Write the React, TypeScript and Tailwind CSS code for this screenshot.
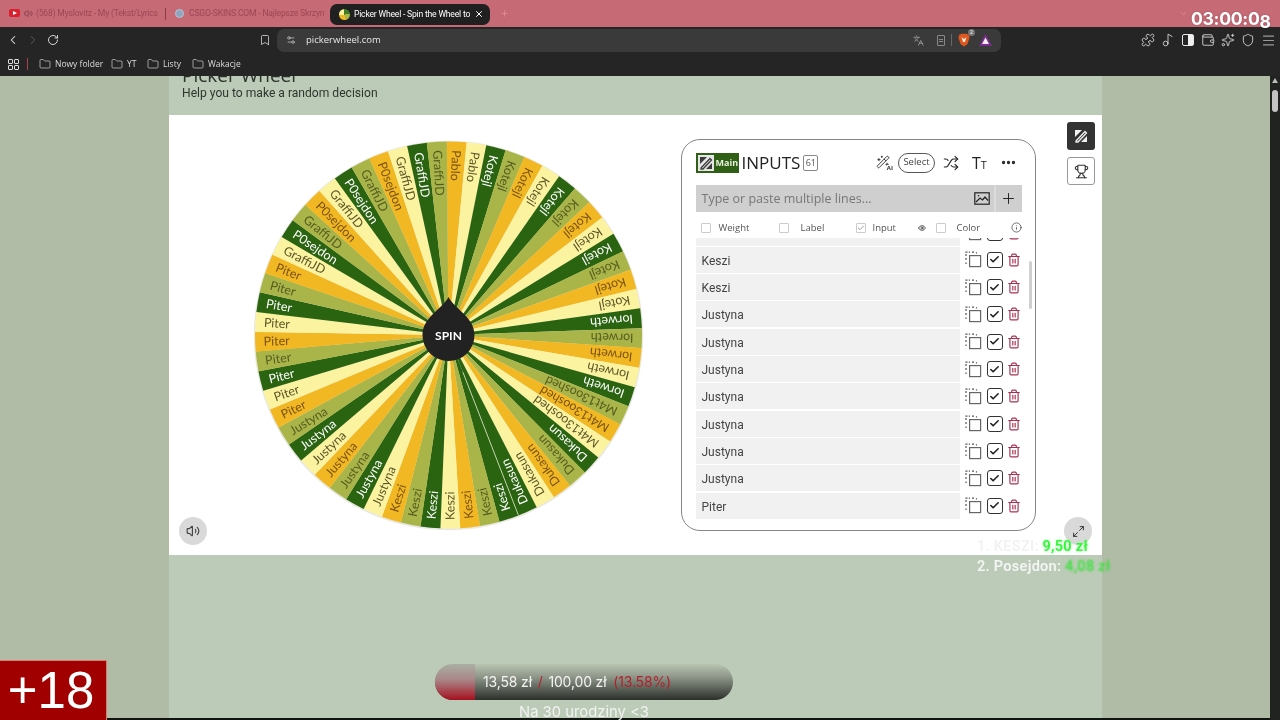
import React from "react";
import {
  Bookmark, Check, ChevronDown, ChevronLeft, ChevronRight, Ellipsis, Folder, Info, Languages, Maximize2,
  Menu, Music2, Plus, Puzzle, RotateCw, Settings2, Shield, Shuffle, Sparkles, Trash2, Trophy, Volume2, Wallet,
  WandSparkles, X, Eye,
} from "lucide-react";

const C = [
  { fill: "#f2b824", text: "#7a5312" },
  { fill: "#fbf3a0", text: "#5a5628" },
  { fill: "#2b6411", text: "#ffffff" },
  { fill: "#a9b548", text: "#565c22" },
];

const seq: [string, number][] = [
  ["Pablo", 2], ["Kotejl", 12], ["Iorweth", 5], ["M4t13ooshed", 3], ["Dukasun", 5],
];
const seq2: [string, number][] = [["Keszi", 7], ["Justyna", 7], ["Piter", 9]];
const tail = ["GraffiJD", "P0sejdon", "GraffiJD", "P0sejdon", "GraffiJD", "P0sejdon", "GraffiJD", "P0sejdon", "GraffiJD", "GraffiJD", "GraffiJD"];

function buildSegments() {
  const out: { label: string; c: number }[] = [];
  let ci = 0;
  for (const [l, n] of seq) for (let i = 0; i < n; i++) out.push({ label: l, c: ci++ % 4 });
  ci = 2;
  for (const [l, n] of seq2) for (let i = 0; i < n; i++) out.push({ label: l, c: ci++ % 4 });
  for (const l of tail) out.push({ label: l, c: ci++ % 4 });
  return out;
}

function Wheel() {
  const segs = buildSegments();
  const step = 360 / segs.length;
  const cx = 200.5, cy = 200, r = 193.5;
  const pt = (a: number, rad: number) => {
    const t = ((a - 90) * Math.PI) / 180;
    return [cx + rad * Math.cos(t), cy + rad * Math.sin(t)];
  };
  return (
    <svg viewBox="0 0 400 400" className="w-[400px] h-[400px] shrink-0 mt-[20px] ml-[79px]">
      <circle cx={cx} cy={cy + 0.5} r={r + 1.2} fill="#e9e9e2" />
      {segs.map((s, i) => {
        const mid = 2.4 + i * step;
        const [x1, y1] = pt(mid - step / 2, r);
        const [x2, y2] = pt(mid + step / 2 + 0.05, r);
        return <path key={i} d={`M${cx} ${cy}L${x1} ${y1}A${r} ${r} 0 0 1 ${x2} ${y2}Z`} fill={C[s.c].fill} />;
      })}
      <line x1={pt(158.8, 40)[0]} y1={pt(158.8, 40)[1]} x2={pt(158.8, r)[0]} y2={pt(158.8, r)[1]} stroke="#dfe8c8" strokeWidth="0.8" />
      {segs.map((s, i) => {
        const mid = 2.4 + i * step;
        const [x, y] = pt(mid, 185);
        return (
          <text key={i} x={x} y={y} dy="4.3" fontSize="12.5" fill={C[s.c].text} className="font-['Lato',sans-serif]"
            transform={`rotate(${mid + 90} ${x} ${y})`}>{s.label}</text>
        );
      })}
      <path d={`M${cx} ${cy - 38}C${cx + 6} ${cy - 26} ${cx + 26} ${cy - 18} ${cx + 26} ${cy}A26 26 0 1 1 ${cx - 26} ${cy}C${cx - 26} ${cy - 18} ${cx - 6} ${cy - 26} ${cx} ${cy - 38}Z`} fill="#222222" />
      <text x={cx} y={cy + 5} textAnchor="middle" fontSize="12" fontWeight="700" fill="#fff" className="font-['Lato',sans-serif]">SPIN</text>
    </svg>
  );
}

function DashCopy() {
  return (
    <svg width="17" height="17" viewBox="0 0 17 17" fill="none" stroke="#555" strokeWidth="1.2">
      <rect x="4.6" y="4.6" width="11" height="11" stroke="#666" />
      <path d="M1 5V1.2H5M7 1.2H10M11.5 1.2V2.6M1 7V10M1 11.5V13" strokeDasharray="2 1.3" />
    </svg>
  );
}

function Row({ name }: { name: string }) {
  return (
    <div className="flex items-center h-[26px] mb-[1.33px] shrink-0">
      <div className="w-[264px] h-full bg-[#f1f1f1] pl-[6px] pt-[2px] flex items-center text-[12px] text-[#444] font-['Roboto',sans-serif]">{name}</div>
      <div className="ml-[5px] flex items-center">
        <DashCopy />
        <div className="ml-[5px] w-[16px] h-[16px] rounded-[3px] border-[1.5px] border-[#333] flex items-center justify-center">
          <Check size={11} strokeWidth={3.5} className="text-[#222]" />
        </div>
        <Trash2 size={14} strokeWidth={2} className="ml-[4px] text-[#a8304f]" />
      </div>
    </div>
  );
}

function Box({ checked }: { checked?: boolean }) {
  return (
    <span className="w-[10px] h-[10px] border border-[#ccc] rounded-[1px] flex items-center justify-center shrink-0">
      {checked && <Check size={8} strokeWidth={2} className="text-[#666]" />}
    </span>
  );
}

function PenLogo({ color, bg }: { color: string; bg: string }) {
  return (
    <svg width="16" height="16" viewBox="0 0 16 16" style={{ background: bg }}>
      <path d="M2 2H9L2 9ZM14 14H8L14 8Z" fill={color} />
      <path d="M3 13L12 3.5L13.5 5L5 14H3Z" fill="none" stroke={color} strokeWidth="1.3" />
    </svg>
  );
}

function InputsPanel() {
  const names = ["", "Keszi", "Keszi", "Justyna", "Justyna", "Justyna", "Justyna", "Justyna", "Justyna", "Justyna", "Piter"];
  return (
    <div className="relative ml-[33px] mt-[24px] w-[355px] h-[392px] shrink-0 rounded-[19px] border-[1.5px] border-[#858585] pl-[13.5px] pr-[12px] pt-[12.5px] bg-white">
      <div className="flex items-center h-[20px]">
        <div className="flex items-center w-[43px] h-[20px] bg-[#2f6016] pl-[2px]">
          <PenLogo color="#3c3c3c" bg="#e6e6e6" />
          <span className="ml-[2px] text-[9px] font-bold text-[#e8f2dc]">Main</span>
        </div>
        <span className="ml-[3px] text-[17px] leading-none text-[#222]">INPUTS</span>
        <span className="ml-[3px] w-[15px] h-[16px] border border-[#888] rounded-[2px] text-[9px] text-[#555] flex items-center justify-center">61</span>
        <div className="ml-auto flex items-center">
          <span className="relative w-[15px] h-[15px]">
            <WandSparkles size={14} strokeWidth={1.6} className="text-[#333]" />
            <span className="absolute -right-[2px] -bottom-[1px] text-[6px] leading-none font-bold text-[#333] bg-white">AI</span>
          </span>
          <span className="ml-[7px] w-[37px] h-[20px] rounded-full border border-[#555] text-[9.5px] text-[#444] flex items-center justify-center">Select</span>
          <Shuffle size={16} strokeWidth={1.6} className="ml-[8px] text-[#222]" />
          <span className="ml-[13px] text-[16px] leading-none text-[#222] flex items-baseline w-[17px]">T<span className="text-[11px]">T</span></span>
          <Ellipsis size={17} strokeWidth={2.6} className="ml-[11px] mr-[6px] text-[#222]" />
        </div>
      </div>
      <div className="mt-[12px] flex h-[27px] w-[326px] bg-[#cfcfcf]">
        <div className="flex-1 flex items-center pl-[6px] pt-[3px] text-[12.5px] font-medium text-[#777]">Type or paste multiple lines...</div>
        <div className="w-[24px] flex items-center justify-center">
          <svg width="16" height="13" viewBox="0 0 16 13" fill="none" stroke="#222" strokeWidth="1.2">
            <rect x=".8" y=".8" width="14.4" height="11.4" />
            <path d="M2 10L6 6L8.5 8L11 5L14 8.5" />
            <circle cx="4.5" cy="3.8" r=".8" fill="#222" stroke="none" />
          </svg>
        </div>
        <div className="w-[28px] border-l-2 border-[#dcdcdc] flex items-center justify-center"><Plus size={17} strokeWidth={1.4} className="text-[#222]" /></div>
      </div>
      <div className="mt-[6px] flex items-center h-[20px] text-[9.5px] text-[#555]">
        <span className="ml-[5px]"><Box /></span>
        <span className="ml-[8px] w-[60px] pt-[2px]">Weight</span>
        <Box />
        <span className="ml-[12px] w-[55px] pt-[2px]">Label</span>
        <Box checked />
        <span className="ml-[7px] w-[45px] pt-[2px]">Input</span>
        <Eye size={8} strokeWidth={2.4} className="text-[#333]" />
        <span className="ml-[10px]"><Box /></span>
        <span className="ml-[11px] w-[54px] pt-[2px]">Color</span>
        <Info size={11} strokeWidth={1.5} className="text-[#333]" />
      </div>
      <div className="h-[282px] overflow-hidden relative">
        <div className="-mt-[18px] flex flex-col">
          {names.map((n, i) => <Row key={i} name={n} />)}
        </div>
      </div>
      <span className="absolute left-[347px] top-[121px] w-[3px] h-[48px] rounded-full bg-[#cfcfcf]" />
    </div>
  );
}

function Tab({ label, icon }: { label: string; icon: React.ReactNode }) {
  return (
    <div className="flex items-center">
      {icon}
      <span className="whitespace-nowrap text-[8.6px] tracking-[-0.2px] text-[#9c4754] font-['Roboto',sans-serif]">{label}</span>
    </div>
  );
}

function FolderItem({ label, w }: { label: string; w: string }) {
  return (
    <div className={`flex items-center ${w}`}>
      <Folder size={12} strokeWidth={1.3} className="text-[#ddd]" />
      <span className="ml-[4px] text-[8.5px] text-[#ddd]">{label}</span>
    </div>
  );
}

export default function App() {
  const iconCls = "text-[#d8d8d8]";
  return (
    <div className="relative w-[1280px] h-[720px] overflow-hidden flex flex-col bg-[#bccbb7] font-['Open_Sans',sans-serif] blur-[0.4px]">
      {/* tab strip */}
      <div className="h-[27px] shrink-0 bg-[#c66a76] flex items-center pl-[9px] relative">
        <div className="w-[156px] shrink-0">
          <Tab label="(568) Myslovitz - My (Tekst/Lyrics" icon={
            <>
              <span className="w-[11px] h-[8px] rounded-[2px] bg-[#d8202e] flex items-center justify-center mr-[4px] shrink-0">
                <span className="border-l-[4px] border-l-white border-y-[2.5px] border-y-transparent" />
              </span>
              <Volume2 size={9} className="text-[#7d3b45] mr-[3px] shrink-0" />
            </>
          } />
        </div>
        <span className="w-px h-[12px] bg-[#8a3d48] shrink-0" />
        <div className="ml-[9px] w-[146px] shrink-0">
          <Tab label="CSGO-SKINS.COM - Najlepsze Skrzyn" icon={
            <span className="w-[9px] h-[9px] rounded-full bg-[#8fa6c0] border border-[#b8c4d6] mr-[5px] shrink-0" />
          } />
        </div>
        <div className="ml-[9px] w-[160px] h-[21px] shrink-0 bg-[#202020] rounded-[7px] flex items-center pl-[9px] pr-[6px] mt-[1px]">
          <span className="w-[11px] h-[11px] rounded-full bg-[conic-gradient(#3f7d22_0_25%,#a9b548_25%_45%,#f2b824_45%_75%,#fbf3a0_75%)] mr-[4px] shrink-0" />
          <span className="flex-1 whitespace-nowrap text-[8.6px] tracking-[-0.2px] text-white font-['Roboto',sans-serif]">Picker Wheel - Spin the Wheel to</span>
          <X size={10} strokeWidth={2.4} className="text-white ml-[3px] shrink-0" />
        </div>
        <Plus size={9} className="ml-[10px] text-[#de93a0]" />
        <ChevronDown size={9} className="ml-[670px] text-[#de93a0]" />
      </div>
      {/* toolbar */}
      <div className="h-[25px] pt-[1px] shrink-0 bg-[#252525] flex items-center pl-[6px]">
        <ChevronLeft size={14} strokeWidth={1.8} className="text-[#e8e8e8]" />
        <ChevronRight size={14} strokeWidth={1.4} className="ml-[6px] text-[#666]" />
        <RotateCw size={12} strokeWidth={1.8} className="ml-[7px] text-[#e8e8e8]" />
        <Bookmark size={12} strokeWidth={1.5} className="ml-[200px] text-[#e0e0e0]" />
        <div className="ml-[6px] w-[724px] h-[23px] rounded-[7px] bg-[#3a3a3a] flex items-center pl-[9px] pr-[9px]">
          <Settings2 size={10} className="text-[#bbb]" />
          <span className="ml-[10px] text-[9.5px] text-[#e6e6e6]">pickerwheel.com</span>
          <Languages size={11} className="ml-auto text-[#999]" />
          <span className="ml-[13px] w-[8px] h-[11px] rounded-[1px] border border-[#888] flex flex-col items-center justify-center gap-[1px]">
            <span className="w-[4px] h-px bg-[#888]" />
            <span className="w-[4px] h-px bg-[#888]" />
          </span>
          <span className="ml-[6px] w-px h-[12px] bg-[#666]" />
          <span className="relative ml-[6px]">
            <svg width="12" height="14" viewBox="0 0 12 14"><path d="M1 2L3.5 .8H8.5L11 2L11.5 5L9.5 11L6 13.5L2.5 11L.5 5Z" fill="#e0561f" /><path d="M3.5 4L6 6L8.5 4L7 9H5Z" fill="#f6e6da" /></svg>
            <span className="absolute -top-[4px] -right-[5px] w-[7px] h-[7px] rounded-full bg-[#777] text-[5px] leading-[7px] text-white text-center">2</span>
          </span>
          <svg width="13" height="12" viewBox="0 0 13 12" className="ml-[9px]"><path d="M6.5 0L13 12H0Z" fill="#7b2b8f" /><path d="M6.5 3.5L10 10H3Z" fill="#f3e9ef" /></svg>
        </div>
        <div className="ml-[140px] flex items-center gap-[6px]">
          <Puzzle size={14} strokeWidth={1.5} className={iconCls} />
          <Music2 size={14} strokeWidth={1.5} className={iconCls} />
          <span className="w-[12px] h-[12px] rounded-[2px] border border-[#e8e8e8] bg-[linear-gradient(90deg,#252525_0_50%,#f0f0f0_50%)] mx-[1px]" />
          <Wallet size={14} strokeWidth={1.5} className={iconCls} />
          <Sparkles size={14} strokeWidth={1.5} className={iconCls} />
          <Shield size={14} strokeWidth={1.5} className={iconCls} />
          <Menu size={15} strokeWidth={1.8} className="text-[#999]" />
        </div>
      </div>
      {/* bookmarks */}
      <div className="h-[24px] shrink-0 bg-[#252525] flex items-center pl-[8px]">
        <div className="grid grid-cols-2 gap-[1px]">
          {[0, 1, 2, 3].map((i) => <span key={i} className="w-[5px] h-[5px] rounded-[1px] border border-[#ddd]" />)}
        </div>
        <span className="ml-[8px] w-px h-[12px] bg-[#b04050]" />
        <div className="ml-[11px] flex items-center">
          <FolderItem label="Nowy folder" w="w-[72px]" />
          <FolderItem label="YT" w="w-[36px]" />
          <FolderItem label="Listy" w="w-[45px]" />
          <FolderItem label="Wakacje" w="w-[60px]" />
        </div>
      </div>
      {/* page */}
      <div className="flex-1 flex min-h-0">
        <div className="w-[169px] shrink-0 bg-[#b1bca6]" />
        <div className="w-[933px] shrink-0 bg-[#bccbb7]">
          <div className="h-[39px] pl-[13px] overflow-hidden">
            <div className="-mt-[13px] text-[19px] leading-[24px] text-[#2c332c]">Picker Wheel</div>
            <div className="-mt-[2px] text-[12.1px] leading-[16px] text-[#2f362f] font-['Roboto',sans-serif]">Help you to make a random decision</div>
          </div>
          <div className="relative h-[440px] bg-white flex items-start">
            <Wheel />
            <InputsPanel />
            <div className="ml-[31px] mt-[7px] flex flex-col gap-[7px]">
              <div className="w-[28px] h-[28px] rounded-[3px] bg-[#333] flex items-center justify-center">
                <PenLogo color="#f0f0f0" bg="#333" />
              </div>
              <div className="w-[28px] h-[28px] rounded-[3px] border border-[#999] flex items-center justify-center">
                <Trophy size={15} strokeWidth={1.8} className="text-[#333]" />
              </div>
            </div>
            <div className="absolute left-[10px] top-[402px] w-[28px] h-[28px] rounded-full bg-[#d9d9d9] flex items-center justify-center">
              <Volume2 size={14} className="text-[#444]" />
            </div>
            <div className="absolute left-[895px] top-[402px] w-[28px] h-[28px] rounded-full bg-[#d9d9d9] flex items-center justify-center">
              <Maximize2 size={13} strokeWidth={1.6} className="text-[#222]" />
            </div>
          </div>
        </div>
        <div className="w-[168px] shrink-0 bg-[#b1bca6]" />
        <div className="w-[10px] shrink-0 bg-[#202320] flex flex-col items-center pt-[1px]">
          <span className="border-b-[5px] border-b-[#bbb] border-x-[3.5px] border-x-transparent mt-[1px]" />
          <span className="mt-[7px] w-[6px] h-[22px] rounded-full bg-[#c4c4c4]" />
        </div>
      </div>
      {/* stream overlays */}
      <div className="absolute left-[1191px] top-[6px] text-[17.6px] leading-[26px] font-bold text-white font-['Inter',sans-serif] tracking-[-0.3px] [text-shadow:0_0_2px_rgba(0,0,0,.25)]">
        03:00:0<span className="relative top-[3px]">8</span>
      </div>
      <div className="absolute left-[977px] top-[537px] flex flex-col text-[14.5px] leading-[20px] font-semibold font-['Roboto',sans-serif] tracking-[0.28px]">
        <div><span className="text-[#f2f2f2] [text-shadow:0_0_3px_rgba(255,255,255,.8)]">1. KESZI:</span> <span className="text-[#35f53c] [text-shadow:0_0_3px_rgba(90,255,90,.6)]">9,50 zł</span></div>
        <div><span className="text-[#f4f4f4]">2. Posejdon:</span> <span className="text-[#3ce03c] blur-[1px]">4,08 zł</span></div>
      </div>
      <div className="absolute left-0 bottom-0 w-[107px] h-[60px] bg-[#a10000] border-t border-r border-[#d8806f] flex items-center justify-center pr-[4px] text-white text-[51px] leading-none font-['Liberation_Sans',sans-serif]">
        +18
      </div>
      <div className="absolute left-[107px] right-[10px] bottom-0 h-[2px] bg-[#101510]" />
      <div className="absolute left-[435px] top-[664px] w-[298px] h-[36px] rounded-full overflow-hidden bg-[linear-gradient(180deg,#b9c4b0,#8f988a_35%,#2b2f2b)] flex items-center">
        <div className="w-[40px] h-full bg-[linear-gradient(180deg,#aab0a3,#a98486_45%,#a5101f)] shrink-0" />
        <span className="ml-[8px] -mt-[2px] text-[14px] text-[#f4f4f4] font-['Inter',sans-serif] tracking-[-0.15px] whitespace-nowrap">
          13,58 zł <span className="text-[#b5202c] mx-[2px]">/</span> 100,00 zł <span className="ml-[3px] text-[#b5202c]">(13.58%)</span>
        </span>
      </div>
      <div className="absolute left-[519px] top-[703px] text-[14.8px] leading-[18px] text-[#f2f2f2] font-['Inter',sans-serif] whitespace-nowrap">Na 30 urodziny &lt;3</div>
    </div>
  );
}
